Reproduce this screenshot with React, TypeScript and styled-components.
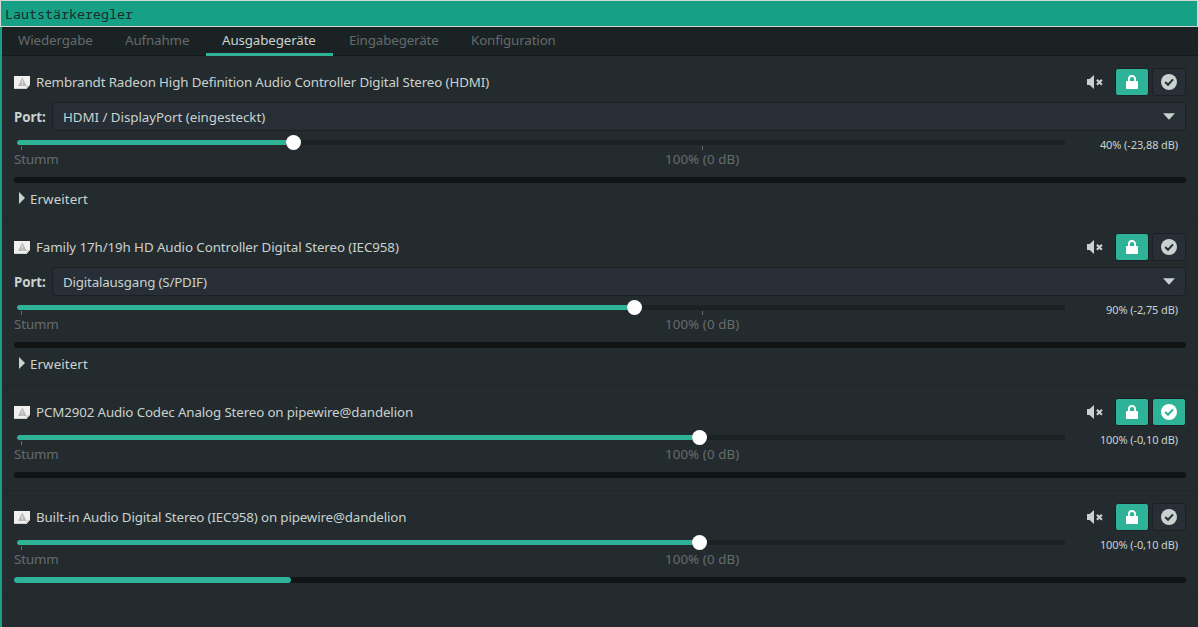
import React from 'react';
import styled, { createGlobalStyle } from 'styled-components';

const c = {
  accent: '#2eb398',
  frame: '#16a085',
  bg: '#242b2e',
  dark: '#1b2224',
  line: '#1a2023',
  control: '#272e36',
  text: '#c9d2cf',
  dim: '#646b6b',
};

const GlobalStyle = createGlobalStyle`
  * { box-sizing: border-box; }
  html, body { margin: 0; height: 100%; overflow: hidden; background: ${c.bg}; }
  button { font: inherit; padding: 0; }
`;

const Window = styled.div`
  display: flex;
  flex-direction: column;
  width: 1198px;
  height: 627px;
  background: ${c.bg};
  color: ${c.text};
  font: 13.33px/20px 'Noto Sans', sans-serif;
  white-space: nowrap;
`;

const TitleBar = styled.header`
  height: 27px;
  flex: none;
  border: 1px solid #d3dad6;
  background: ${c.frame};
  color: #1c2b2a;
  padding: 4px 4px 0;
  font: 13.33px/19px 'Noto Sans Mono', 'Liberation Mono', monospace;
`;

const Body = styled.main`
  flex: 1;
  border-left: 2px solid ${c.frame};
`;

const Tabs = styled.nav`
  display: flex;
  height: 29px;
  background: ${c.dark};
  box-shadow: inset 0 -1px #141a1b;
`;

const Tab = styled.button<{ $width: number; $active?: boolean }>`
  width: ${p => p.$width}px;
  border: 0;
  border-bottom: 3px solid ${p => (p.$active ? c.accent : 'transparent')};
  background: none;
  color: ${p => (p.$active ? c.text : c.dim)};
  line-height: 26px;
  text-align: left;
  padding-left: 16px;
  letter-spacing: -0.12px;
`;

const Device = styled.section`
  padding: 12px 12px 0;
  border-bottom: 1px solid #20272a;
`;

const Header = styled.div`
  display: flex;
  align-items: center;
  height: 28px;
`;

const Name = styled.span<{ $tracking: number }>`
  flex: 1;
  margin-left: 6px;
  letter-spacing: ${p => p.$tracking}px;
`;

const MuteButton = styled.button`
  display: flex;
  border: 0;
  background: none;
  margin-right: 9px;
`;

const Toggle = styled.button<{ $on?: boolean }>`
  display: flex;
  align-items: center;
  justify-content: center;
  width: 34px;
  height: 28px;
  margin-left: 3px;
  border: 1px solid ${c.line};
  border-radius: 3px;
  background: ${p => (p.$on ? c.accent : c.control)};
  color: ${p => (p.$on ? '#fff' : c.text)};
`;

const PortRow = styled.div`
  display: flex;
  align-items: center;
  height: 29px;
  margin-top: 6px;
`;

const PortLabel = styled.b`
  width: 38px;
  letter-spacing: -0.1px;
`;

const Combo = styled.div<{ $tracking: number }>`
  display: flex;
  flex: 1;
  align-items: center;
  justify-content: space-between;
  height: 29px;
  padding: 0 10px;
  border: 1px solid ${c.line};
  border-radius: 3px;
  background: ${c.control};
  letter-spacing: ${p => p.$tracking}px;
`;

const VolumeRow = styled.div`
  display: flex;
  justify-content: space-between;
  height: 46px;
  padding: 4px 8px 0 3px;
`;

const Scale = styled.div`
  width: 1048px;
`;

const Trough = styled.div`
  display: flex;
  align-items: center;
  height: 15px;
  border-radius: 3px;
  background: linear-gradient(${c.dark}, ${c.dark}) center / 100% 5px no-repeat;
`;

const Fill = styled.div`
  height: 5px;
  border-radius: 3px 0 0 3px;
  background: ${c.accent};
`;

const Knob = styled.div`
  position: relative;
  z-index: 1;
  width: 15px;
  height: 15px;
  border-radius: 50%;
  background: #fff;
`;

const Marks = styled.div`
  display: flex;
  margin-top: -4px;
`;

const Mark = styled.div<{ $width: number; $tick: number }>`
  width: ${p => p.$width}px;
  margin-left: -3px;
  color: ${c.dim};
  line-height: 18px;
  &::before {
    content: '';
    display: block;
    width: 1px;
    height: 4px;
    margin-left: ${p => p.$tick}px;
    background: ${c.dim};
  }
`;

const MarkText = styled.span<{ $tracking: number }>`
  letter-spacing: ${p => p.$tracking}px;
`;

const Value = styled.span`
  font-size: 11px;
  letter-spacing: -0.1px;
`;

const Meter = styled.div`
  height: 6px;
  border-radius: 3px;
  background: #101415;
`;

const Level = styled.div`
  height: 6px;
  border-radius: 3px;
  background: ${c.accent};
`;

const Expander = styled.div`
  display: flex;
  align-items: center;
  gap: 5px;
  height: 37px;
  padding: 0 0 5px 5px;
  letter-spacing: 0.1px;

  svg { margin-top: -2px; }
`;

const Gap = styled.div`
  height: 12px;
`;

const CardIcon = () => (
  <svg width="16" height="14" viewBox="0 0 16 14">
    <path d="M0 1H16V10L12.5 14H0Z" fill="#f1f0ee" />
    <path d="M16 9.5L12 14V11Z" fill="#d2d0cb" />
    <path d="M0 13.5H12" stroke="#d2d0cb" />
    <path d="M8.3 2.6L12.6 11H4Z" fill="#b8b7b4" />
    <path d="M8.3 5.6V8.4M8.3 9.2V10.2" stroke="#f1f0ee" strokeWidth="1" />
  </svg>
);

const MuteIcon = () => (
  <svg width="16" height="16" viewBox="0 0 16 16">
    <path d="M0 5H2.6L7 1V15L2.6 11H0Z" fill={c.text} />
    <path d="M9.9 5.7L14.9 10.7M14.9 5.7L9.9 10.7" stroke={c.text} strokeWidth="2.1" />
  </svg>
);

const LockIcon = () => (
  <svg width="16" height="16" viewBox="0 0 16 16">
    <path d="M4.9 8V5.1a3.1 3.1 0 0 1 6.2 0V8" fill="none" stroke="currentColor" strokeWidth="1.8" />
    <rect x="2" y="7" width="12" height="8" rx="0.8" fill="currentColor" />
  </svg>
);

const CheckIcon = ({ cut }: { cut: string }) => (
  <svg width="16" height="16" viewBox="0 0 16 16">
    <circle cx="8" cy="8" r="8" fill="currentColor" />
    <path d="M4.2 8L7 10.8L12 5.4" fill="none" stroke={cut} strokeWidth="2" />
  </svg>
);

const DownArrow = () => (
  <svg width="12" height="7" viewBox="0 0 12 7">
    <path d="M0 0.3H12L6 6.7Z" fill={c.text} />
  </svg>
);

const RightArrow = () => (
  <svg width="6" height="12" viewBox="0 0 6 12">
    <path d="M0 0L6 6L0 12Z" fill={c.text} />
  </svg>
);

interface DeviceData {
  name: string;
  tracking: number;
  port?: string;
  portTracking?: number;
  fill: number;
  value: string;
  level?: number;
  standard?: boolean;
}

const devices: DeviceData[] = [
  { name: 'Rembrandt Radeon High Definition Audio Controller Digital Stereo (HDMI)', tracking: -0.12, port: 'HDMI / DisplayPort (eingesteckt)', portTracking: -0.04, fill: 269, value: '40% (-23,88 dB)' },
  { name: 'Family 17h/19h HD Audio Controller Digital Stereo (IEC958)', tracking: -0.085, port: 'Digitalausgang (S/PDIF)', portTracking: -0.18, fill: 610, value: '90% (-2,75 dB)' },
  { name: 'PCM2902 Audio Codec Analog Stereo on pipewire@dandelion', tracking: -0.13, fill: 675, value: '100% (-0,10 dB)', standard: true },
  { name: 'Built-in Audio Digital Stereo (IEC958) on pipewire@dandelion', tracking: -0.142, fill: 675, value: '100% (-0,10 dB)', level: 277 },
];

const tabs = [
  { label: 'Wiedergabe', width: 107 },
  { label: 'Aufnahme', width: 97 },
  { label: 'Ausgabegeräte', width: 127, active: true },
  { label: 'Eingabegeräte', width: 122 },
  { label: 'Konfiguration', width: 116 },
];

export default function App() {
  return (
    <Window>
      <GlobalStyle />
      <TitleBar>Lautstärkeregler</TitleBar>
      <Body>
        <Tabs>
          {tabs.map(t => (
            <Tab key={t.label} $width={t.width} $active={t.active}>{t.label}</Tab>
          ))}
        </Tabs>
        {devices.map(d => (
          <Device key={d.name}>
            <Header>
              <CardIcon />
              <Name $tracking={d.tracking}>{d.name}</Name>
              <MuteButton aria-label="Stumm"><MuteIcon /></MuteButton>
              <Toggle $on aria-label="Kanäle sperren"><LockIcon /></Toggle>
              <Toggle $on={d.standard} aria-label="Standard">
                <CheckIcon cut={d.standard ? c.accent : c.control} />
              </Toggle>
            </Header>
            {d.port && (
              <PortRow>
                <PortLabel>Port:</PortLabel>
                <Combo $tracking={d.portTracking ?? 0}>{d.port}<DownArrow /></Combo>
              </PortRow>
            )}
            <VolumeRow>
              <Scale>
                <Trough>
                  <Fill style={{ width: d.fill }} />
                  <Knob />
                </Trough>
                <Marks>
                  <Mark $width={654} $tick={7}><MarkText $tracking={-0.12}>Stumm</MarkText></Mark>
                  <Mark $width={80} $tick={37}><MarkText $tracking={0.08}>100% (0 dB)</MarkText></Mark>
                </Marks>
              </Scale>
              <Value>{d.value}</Value>
            </VolumeRow>
            <Meter>{d.level && <Level style={{ width: d.level }} />}</Meter>
            {d.port ? <Expander><RightArrow />Erweitert</Expander> : <Gap />}
          </Device>
        ))}
      </Body>
    </Window>
  );
}
